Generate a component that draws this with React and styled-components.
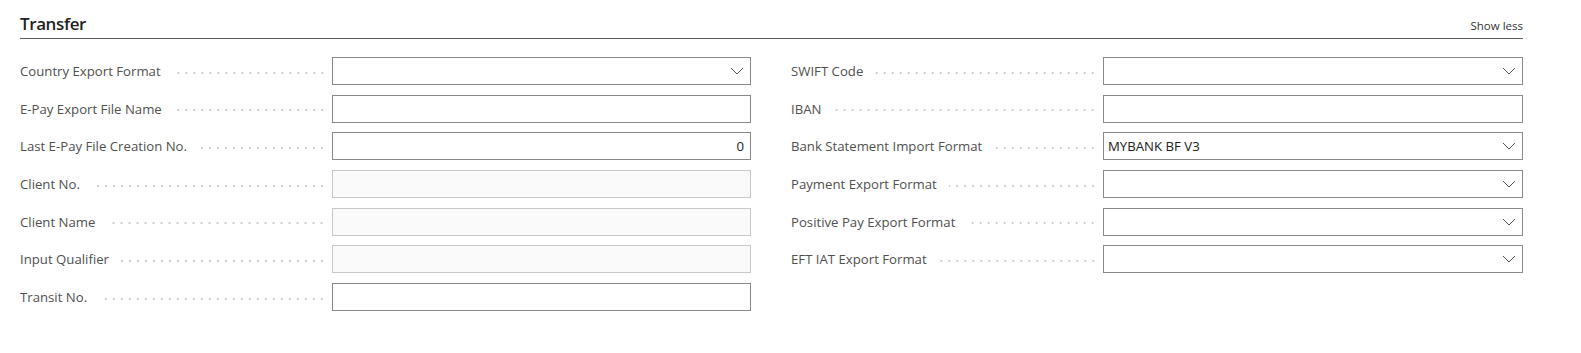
import styled, { createGlobalStyle } from 'styled-components';

const GlobalStyle = createGlobalStyle`
  body {
    margin: 0;
    background: #ffffff;
    font-family: "Open Sans", "Noto Sans", sans-serif;
    color: #212121;
  }
`;

const Page = styled.div`
  width: 1503px;
  padding: 12px 0 0 20px;
`;

const Header = styled.div`
  display: flex;
  align-items: flex-end;
  justify-content: space-between;
  border-bottom: 1px solid #5c5c5c;
  padding-bottom: 2px;
`;

const Title = styled.h2`
  margin: 0;
  font-size: 17px;
  font-weight: 600;
  letter-spacing: -0.4px;
  line-height: 24px;
  color: #1f1f1f;
`;

const ShowLess = styled.button`
  border: none;
  background: none;
  padding: 0 0 2px;
  font-family: inherit;
  font-size: 11.5px;
  color: #333;
  cursor: pointer;
  line-height: 16px;
`;

const Columns = styled.div`
  display: grid;
  grid-template-columns: 731px 732px;
  column-gap: 40px;
  padding-top: 18px;
`;

const Column = styled.div`
  display: flex;
  flex-direction: column;
  gap: 9.7px;
`;

const Row = styled.div`
  display: grid;
  grid-template-columns: 312px 1fr;
  align-items: center;
  height: 28px;
`;

const Label = styled.div`
  display: flex;
  align-items: center;
  font-size: 13.2px;
  color: #505050;
  white-space: nowrap;
  padding-right: 6px;
`;

const Leader = styled.span`
  flex: 1;
  height: 4px;
  margin: 3px 0 0 12px;
  background-image: radial-gradient(circle, #cfcfcf 0.9px, transparent 1.3px);
  background-size: 8px 4px;
  background-position: right center;
  background-repeat: repeat-x;
`;

const Field = styled.div`
  display: flex;
  align-items: center;
  height: 28px;
  box-sizing: border-box;
  border: 1px solid ${(p) => (p.$disabled ? '#c8c8c8' : '#8a8a8a')};
  background: ${(p) => (p.$disabled ? '#fafafa' : '#ffffff')};
  padding: 0 6px 0 4px;
  font-size: 13.2px;
  color: #212121;
`;

const Value = styled.span`
  flex: 1;
  text-align: ${(p) => (p.$right ? 'right' : 'left')};
  padding-right: ${(p) => (p.$right ? '0' : '4px')};
`;

const Chevron = () => (
  <svg width="14" height="8" viewBox="0 0 14 8" fill="none">
    <path d="M1 1l6 6 6-6" stroke="#555" strokeWidth="1" />
  </svg>
);

const left = [
  { label: 'Country Export Format', select: true },
  { label: 'E-Pay Export File Name' },
  { label: 'Last E-Pay File Creation No.', value: '0', right: true },
  { label: 'Client No.', disabled: true },
  { label: 'Client Name', disabled: true },
  { label: 'Input Qualifier', disabled: true },
  { label: 'Transit No.' },
];

const right = [
  { label: 'SWIFT Code', select: true },
  { label: 'IBAN' },
  { label: 'Bank Statement Import Format', select: true, value: 'MYBANK BF V3' },
  { label: 'Payment Export Format', select: true },
  { label: 'Positive Pay Export Format', select: true },
  { label: 'EFT IAT Export Format', select: true },
];

const FieldRow = ({ label, value, select, disabled, right: alignRight }) => (
  <Row>
    <Label>
      {label}
      <Leader />
    </Label>
    <Field $disabled={disabled}>
      <Value $right={alignRight}>{value}</Value>
      {select && <Chevron />}
    </Field>
  </Row>
);

export default function App() {
  return (
    <>
      <GlobalStyle />
      <Page>
        <Header>
          <Title>Transfer</Title>
          <ShowLess>Show less</ShowLess>
        </Header>
        <Columns>
          <Column>
            {left.map((f) => (
              <FieldRow key={f.label} {...f} />
            ))}
          </Column>
          <Column>
            {right.map((f) => (
              <FieldRow key={f.label} {...f} />
            ))}
          </Column>
        </Columns>
      </Page>
    </>
  );
}
